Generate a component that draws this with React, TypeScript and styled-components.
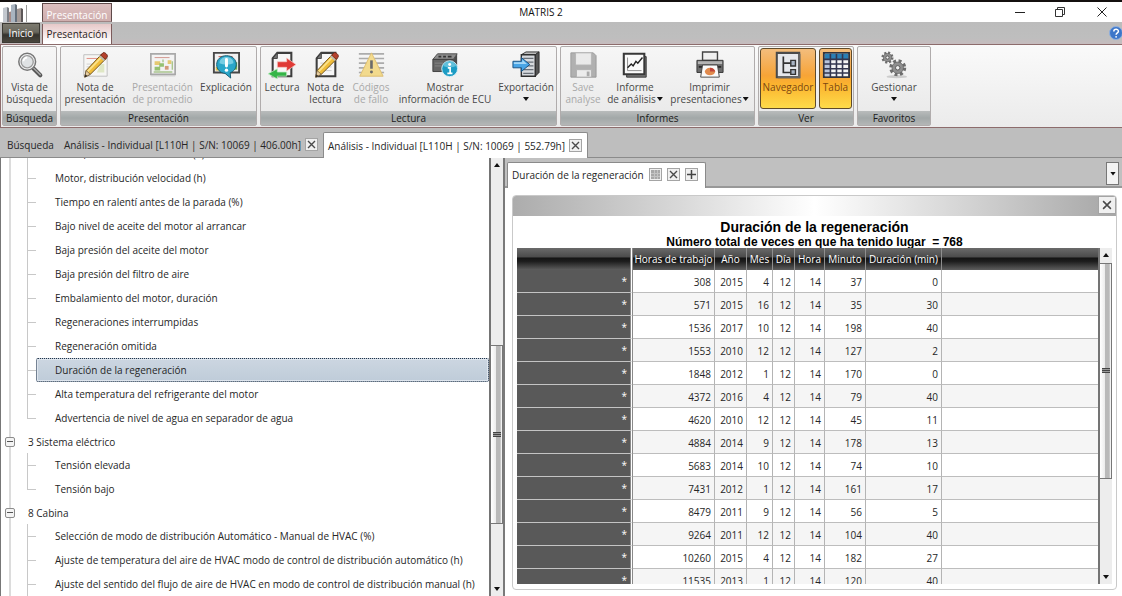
import React from "react";
import styled, { createGlobalStyle, css } from "styled-components";

const Global = createGlobalStyle`
  *, *::before, *::after { box-sizing: border-box; }
  html, body { margin: 0; height: 100%; }
  body { background: #fff; overflow: hidden; }
  #root { height: 100%; }
  body, button, table { font-family: "Open Sans", "Noto Sans", sans-serif; font-size: 10px; color: #262626; }
  button { margin: 0; padding: 0; border: 0; background: none; }
  svg { display: block; }
`;

const Window = styled.div`
  height: 100vh;
  display: flex;
  flex-direction: column;
  border-top: 2px solid #14100f;
`;

/* ---------- Title bar and ribbon tabs ---------- */

const TopArea = styled.header`
  display: grid;
  grid-template-columns: 42px 70px 1fr auto;
  grid-template-rows: 20px 22px;
  background: linear-gradient(#fff 20px, #bcbcbc 20px, #bebebe 36px, #c6bcbe 42px);
`;

const AppIcon = styled.div`
  padding: 2px 0 0 2px;
`;

const ContextHeader = styled.div`
  border: 1px solid #5f4a4a;
  border-bottom-color: #a08484;
  background: linear-gradient(#dcbebe, #cfaeae);
  color: #fff;
  text-align: center;
  line-height: 22px;
  margin-top: 1px;
`;

const Title = styled.h1`
  margin: 0;
  padding-right: 29px;
  font-size: 10px;
  font-weight: 400;
  line-height: 20px;
  color: #111;
  text-align: center;
`;

const WindowButtons = styled.div`
  display: flex;
  align-items: center;
  justify-content: flex-end;
`;

const WindowButton = styled.button`
  width: 41px;
  height: 20px;
  display: flex;
  align-items: center;
  justify-content: center;
`;

const RibbonTabs = styled.nav`
  grid-column: 1 / -1;
  display: flex;
  align-items: stretch;
`;

const StartTab = styled.button`
  width: 38px;
  margin: 1px 2px 1px 2px;
  border: 1px solid #3c3a34;
  color: #fff;
  background: linear-gradient(#7c7a6f, #6a685e 45%, #35332d 60%, #4a473e);
`;

const ActiveRibbonTab = styled.button`
  width: 70px;
  margin-top: 2px;
  border: solid #7c5c5c;
  border-width: 0 1px;
  color: #2a1c1c;
  background: linear-gradient(#e6c8c8, #fff 90%);
`;

const HelpButton = styled.button`
  margin: 4px 0 0 auto;
  width: 13px;
  height: 14px;
  overflow: hidden;
`;

/* ---------- Ribbon ---------- */

const Ribbon = styled.section`
  display: flex;
  gap: 3px;
  padding: 1px;
  border: 1px solid #8d6c6c;
  border-right: 0;
  background: linear-gradient(#fafafa, #ebebeb);
`;

const Group = styled.fieldset`
  min-width: 0;
  margin: 0;
  padding: 0;
  display: flex;
  flex-direction: column;
  border: 1px solid #b0acac;
  border-radius: 2px;
  background: linear-gradient(#f6f6f6, #e8e8e8);
`;

const GroupBody = styled.div<{ $spaced?: boolean }>`
  display: flex;
  gap: ${(p) => (p.$spaced ? 3 : 0)}px;
  height: 64px;
  padding: 1px;
`;

const GroupLabel = styled.div`
  height: 14px;
  line-height: 14px;
  text-align: center;
  color: #1c1c1c;
  background: linear-gradient(#b9bcbc, #a2a8a8 50%, #b4b6b6);
`;

const Tool = styled.button<{ $w: number; $on?: boolean }>`
  width: ${(p) => p.$w}px;
  height: 61px;
  display: flex;
  flex-direction: column;
  align-items: center;
  line-height: 12px;
  color: #484848;
  white-space: nowrap;
  border: 1px solid transparent;
  border-width: 1px 0;
  border-radius: 3px;
  &:disabled { color: #a9a9a9; }
  &:disabled svg { opacity: 0.6; }
  ${(p) =>
    p.$on &&
    css`
      color: #7d4712;
      border-width: 1px;
      border-color: #5f4a2a;
      background: linear-gradient(#f3bd7d, #f7a437 45%, #fbb32e 60%, #fedb4a);
    `}
`;

const IconBox = styled.span`
  height: 32px;
  display: flex;
  align-items: center;
`;

const Caret = styled.span`
  display: inline-block;
  width: 6px;
  height: 4px;
  margin-left: 1px;
  vertical-align: 2px;
  background: #111;
  clip-path: polygon(0 0, 100% 0, 50% 100%);
`;

const CaretBelow = styled(Caret)`
  display: block;
  margin: 4px 0 0;
`;

/* ---------- Document tabs ---------- */

const DocTabs = styled.nav`
  display: flex;
  gap: 5px;
  align-items: stretch;
  height: 30px;
  padding: 4px 0 0 2px;
  background: #bebebe;
  border-bottom: 1px solid #8b8b8b;
`;

const DocTab = styled.div<{ $active?: boolean }>`
  display: flex;
  align-items: center;
  gap: 4px;
  padding: 0 0 0 5px;
  ${(p) =>
    p.$active &&
    css`
      margin-bottom: -1px;
      padding: 0 5px 0 4px;
      border: 1px solid #8b8b8b;
      border-bottom: 0;
      border-radius: 2px 2px 0 0;
      background: #fff;
    `}
`;

const TabText = styled.button`
  white-space: nowrap;
`;

const SquareButton = styled.button<{ $size?: number }>`
  flex: none;
  width: ${(p) => p.$size ?? 13}px;
  height: ${(p) => p.$size ?? 13}px;
  display: flex;
  align-items: center;
  justify-content: center;
  border: 1px solid #a4a4a4;
  background: #f0f0f0;
`;

/* ---------- Tree ---------- */

const Main = styled.main`
  flex: 1;
  min-height: 0;
  display: grid;
  grid-template-columns: minmax(0, 505fr) minmax(0, 617fr);
`;

const Navigator = styled.aside`
  display: flex;
  min-height: 0;
  border-left: 1px solid #777;
  border-right: 2px solid #7a7a7a;
`;

const Tree = styled.ul`
  flex: 1;
  min-width: 0;
  margin: 0;
  padding: 0;
  list-style: none;
  overflow: hidden;
  background: linear-gradient(90deg, transparent 8px, #dcdcdc 8px, #dcdcdc 10px, transparent 10px);
`;

const Leaf = styled.li<{ $last?: boolean; $clipped?: boolean }>`
  display: flex;
  align-items: flex-end;
  height: ${(p) => (p.$clipped ? 8 : 24)}px;
  overflow: hidden;
  padding-left: 26px;
  white-space: nowrap;
  &::before {
    content: "";
    flex: none;
    width: 9px;
    height: 24px;
    background:
      linear-gradient(#c8c8c8, #c8c8c8) 0 0 / 1px ${(p) => (p.$last ? "12px" : "100%")} no-repeat,
      linear-gradient(#c8c8c8, #c8c8c8) 0 12px / 9px 1px no-repeat;
  }
`;

const LeafLabel = styled.button<{ $selected?: boolean }>`
  flex: 1;
  height: 24px;
  padding-left: 18px;
  border: 1px solid transparent;
  text-align: left;
  white-space: nowrap;
  ${(p) =>
    p.$selected &&
    css`
      border: 1px dotted #24354a;
      border-radius: 2px;
      background: linear-gradient(#ccd6e1, #bfccd9);
      box-shadow: inset 0 0 0 1px #dfe6ee;
    `}
`;

const Branch = styled.li`
  display: flex;
  align-items: center;
  gap: 13px;
  height: 23px;
  padding-left: 4px;
`;

const Expander = styled.button`
  width: 10px;
  height: 10px;
  display: flex;
  align-items: center;
  justify-content: center;
  border: 1px solid #8c8c8c;
  border-radius: 2px;
  background: #f4f4f4;
  &::before { content: ""; width: 6px; height: 1px; background: #555; }
`;

/* ---------- Scroll bar ---------- */

const Scroll = styled.div`
  flex: none;
  width: 14px;
  display: flex;
  flex-direction: column;
  border-left: 2px solid #747474;
  background: #ededed;
`;

const ScrollArrow = styled.button<{ $down?: boolean }>`
  height: 14px;
  display: flex;
  align-items: center;
  justify-content: center;
  &::before {
    content: "";
    width: 6px;
    height: 4px;
    background: #111;
    clip-path: ${(p) => (p.$down ? "polygon(0 0, 100% 0, 50% 100%)" : "polygon(50% 0, 100% 100%, 0 100%)")};
  }
`;

const ScrollGap = styled.div<{ $grow: number }>`
  flex: ${(p) => p.$grow} 1 0;
`;

const Thumb = styled.div<{ $grow: number }>`
  flex: ${(p) => p.$grow} 1 0;
  display: flex;
  align-items: center;
  justify-content: center;
  border: 1px solid #777;
  border-width: 1px 1px 1px 0;
  background: linear-gradient(90deg, #fff 0, #ececec 45%, #b9b9b9 50%, #b9b9b9 85%, #f2f2f2 90%);
  &::before {
    content: "";
    width: 8px;
    height: 5px;
    background: repeating-linear-gradient(#444 0, #444 1px, #999 1px, #999 2px);
  }
`;

/* ---------- Presentation pane ---------- */

const Pane = styled.section`
  display: flex;
  flex-direction: column;
  min-height: 0;
  background: #fff;
`;

const PaneTabs = styled.div`
  display: flex;
  height: 30px;
  padding: 4px 3px 0 2px;
  background: #c0c0c0;
  border-bottom: 2px solid #989898;
`;

const PaneTab = styled.div`
  display: flex;
  align-items: center;
  gap: 5px;
  margin-bottom: -2px;
  padding: 0 7px 2px 4px;
  border: 1px solid #8a8a8a;
  border-bottom: 0;
  border-radius: 2px 2px 0 0;
  background: #fff;
`;

const PaneMenu = styled.button`
  width: 13px;
  height: 23px;
  margin-left: auto;
  display: flex;
  align-items: center;
  justify-content: center;
  border: 1px solid #777;
  background: #f3f3f3;
`;

const Card = styled.article`
  flex: 1;
  min-height: 0;
  display: flex;
  flex-direction: column;
  margin: 7px 5px 6px 7px;
  border: 1px solid #c9c9c9;
  border-radius: 4px;
  overflow: hidden;
`;

const CardBar = styled.div`
  display: flex;
  justify-content: flex-end;
  height: 20px;
  background: linear-gradient(90deg, #acacac, #d4d4d4 25%, #fff 50%, #d4d4d4 75%, #a6a6a6);
`;

const CardTitle = styled.h2`
  margin: 0;
  padding-top: 1px;
  font: bold 14px/20px "Liberation Sans", Arial, sans-serif;
  color: #000;
  text-align: center;
`;

const CardSubtitle = styled.p`
  margin: 0;
  height: 11px;
  font: bold 12px/11px "Liberation Sans", Arial, sans-serif;
  color: #000;
  text-align: center;
  white-space: pre;
`;

const TableArea = styled.div`
  flex: 1;
  min-height: 0;
  display: flex;
  margin: 0 4px 5px 4px;
`;

const TableClip = styled.div`
  flex: 1;
  min-width: 0;
  overflow: hidden;
`;

const Column = styled.col<{ $w?: number }>`
  width: ${(p) => (p.$w ? `${p.$w}px` : "auto")};
`;

const DataTable = styled.table`
  width: 100%;
  table-layout: fixed;
  border-collapse: separate;
  border-spacing: 0;
  thead th {
    height: 22px;
    padding: 0;
    font-weight: 400;
    color: #fff;
    text-align: center;
    white-space: nowrap;
    border-right: 1px solid #8e8e8e;
    background: linear-gradient(#6a6a6a, #4c4c4c 40%, #141414 46%, #1c1c1c 60%, #5e5e5e);
  }
  tbody td {
    height: 23px;
    padding: 2px 3px 0 0;
    text-align: right;
    border-right: 1px solid #b4b4b4;
    border-bottom: 1px solid #bdbdbd;
  }
  tbody tr:nth-child(even) td { background: #f5f5f5; }
  tbody th {
    padding: 0 3px 0 0;
    font-weight: 400;
    color: #fff;
    text-align: right;
    border-bottom: 1px solid #c4c4c4;
    background: #595959;
  }
  thead th:first-child, tbody th { border-right: 3px double #8a8a8a; background-clip: padding-box; }
  td:last-child, thead th:last-child { border-right: 0; }
`;

/* ---------- Icons ---------- */

const Icon = ({ children }: { children: React.ReactNode }) => (
  <svg width="28" height="28" viewBox="0 0 30 30" aria-hidden="true">
    {children}
  </svg>
);

const Cross = ({ size = 9 }: { size?: number }) => (
  <svg width={size} height={size} viewBox="0 0 9 9" aria-hidden="true">
    <path d="M1 1l7 7M8 1L1 8" stroke="#4a4a4a" strokeWidth="1.4" />
  </svg>
);

const LogoIcon = () => (
  <svg width="26" height="18" viewBox="0 0 26 18" aria-hidden="true">
    <path d="M1 4l4-1v15H1z" fill="#c2c7ce" />
    <path d="M5 3l2 1v14H5z" fill="#7b7f87" />
    <path d="M7 8l4-1v11H7z" fill="#a58a86" />
    <path d="M9 1l4-1v18H9z" fill="#a9b4c0" />
    <path d="M13 0l2 1v17h-2z" fill="#66707c" />
    <path d="M15 5l4-1v14h-4z" fill="#a59b98" />
    <path d="M19 4l2 1v13h-2z" fill="#5c5758" />
    <path d="M24.500 1v17" stroke="#999" />
  </svg>
);

const SearchIcon = () => (
  <Icon>
    <path d="M19 19l7 7" stroke="#555" strokeWidth="4.500" strokeLinecap="round" />
    <path d="M19 18.500l7 7" stroke="#aaa" strokeWidth="1.600" strokeLinecap="round" />
    <circle cx="12" cy="11.500" r="9" fill="#f2f3f4" stroke="#777" strokeWidth="1.600" />
    <circle cx="12" cy="11.500" r="6.500" fill="#dfe2e4" stroke="#9a9a9a" strokeWidth="1.400" />
    <path d="M8 11a4 4 0 0 1 4-4" fill="none" stroke="#fff" strokeWidth="2" />
  </Icon>
);

const Pencil = () => (
  <g>
    <path d="M4 28l1.500-7L22 3.500l5 4.500L10 25z" fill="#f0bd3a" stroke="#6d4d16" strokeWidth="1" />
    <path d="M7 22L23.500 5" stroke="#fbe28a" strokeWidth="2" />
    <path d="M21 4.500L23.500 2c1.500-1.500 6 2.500 4.500 4.500L26 9z" fill="#b5402c" stroke="#6b2a1c" />
    <path d="M20 5.500l5 4.500" stroke="#b9b9b9" strokeWidth="1.600" />
    <path d="M4 28l1.500-7L10 25z" fill="#e9cfa0" stroke="#5b4a35" strokeWidth=".7" />
    <path d="M4 28l.7-3 2 1.800z" fill="#222" />
  </g>
);

const PresentationNoteIcon = () => (
  <Icon>
    <path d="M3 4h25v23H3z" fill="#f6f6f4" stroke="#bdbdbd" />
    <path d="M6 8h14" stroke="#e08a80" />
    <path d="M17 23h8v-9h-4z" fill="#dfe7c5" />
    <path d="M6 14h6M6 17h5" stroke="#ccc" />
    <Pencil />
  </Icon>
);

const AverageIcon = () => (
  <Icon>
    <path d="M2 3h26v22H2z" fill="#f3f3f3" stroke="#777" strokeWidth="1.800" />
    <path d="M2 26.500h26" stroke="#bbb" strokeWidth="1.500" />
    <path d="M6 7h16" stroke="#c2695d" strokeWidth="1.200" />
    <path d="M6 11h6v4H6zM20 10h4v4h-4z" fill="#dcae1d" />
    <path d="M11 13h5v4h-5zM6 17h6v4H6z" fill="#58a01c" />
    <path d="M17 16h4v4h-4z" fill="#c0602a" />
    <path d="M25 11v9M5 22.500h20M15 9v3" stroke="#7aa84d" strokeWidth="1.500" />
  </Icon>
);

const ExplanationIcon = () => (
  <Icon>
    <path d="M2 2h27v21H2z" fill="#f1f1f1" stroke="#474747" strokeWidth="2" />
    <path d="M7 6h15" stroke="#c75a4c" />
    <path d="M4 17h7v4H4z" fill="#e3c04a" />
    <path d="M23 12h4v8h-4z" fill="#76b04a" />
    <path d="M15.500 5c6.300 0 10.500 4.200 10.500 9.500 0 4.200-3 7.500-6.500 8.800L20 29l-6-5C8.500 23.500 5 19.500 5 14.500 5 9.200 9.200 5 15.500 5z" fill="#2aa6c9" stroke="#12586f" />
    <path d="M8 13c0-4 3.500-6.500 7.500-6.500S23 9 23 13c-4 2-11 2-15 0z" fill="#8ad7ea" opacity=".8" />
    <path d="M15.500 9v7" stroke="#fff" strokeWidth="3.200" strokeLinecap="round" />
    <circle cx="15.500" cy="20.500" r="1.800" fill="#fff" />
  </Icon>
);

const Sheet = () => (
  <g>
    <path d="M10 2h15v25H5V8z" fill="#f7f7f7" stroke="#3e3e3e" strokeWidth="2.200" />
    <path d="M5 8l5-6v6z" fill="#777" stroke="#3e3e3e" />
  </g>
);

const ReadIcon = () => (
  <Icon>
    <Sheet />
    <path d="M10 11.500h10V7.500l10 7-10 7v-4H10z" fill="#e03a36" stroke="#f6c9c4" strokeWidth=".8" />
    <path d="M20 27h-10v3L0 24.500 10 19v3.500h10z" fill="#35b548" stroke="#c5efc9" strokeWidth=".8" />
  </Icon>
);

const ReadNoteIcon = () => (
  <Icon>
    <Sheet />
    <path d="M9 13h12M9 17h12M9 21h12" stroke="#c8c8c8" />
    <Pencil />
  </Icon>
);

const FaultIcon = () => (
  <Icon>
    <path d="M2 3h27M2 8h27M2 13h27M2 18h27M2 23h27" stroke="#7c7c7c" strokeWidth="1.800" />
    <path d="M15.500 2L28 27H3z" fill="#f3cb4b" stroke="#d09a1a" strokeLinejoin="round" />
    <path d="M15.500 10v9" stroke="#111" strokeWidth="2.800" />
    <circle cx="15.500" cy="22.500" r="1.600" fill="#111" />
  </Icon>
);

const EcuIcon = () => (
  <Icon>
    <path d="M2 9l5-6h21l-4 6z" fill="#8d8d8d" stroke="#4a4a4a" />
    <path d="M2 9h22v13H2z" fill="#666" stroke="#3d3d3d" />
    <path d="M24 9l4-6v12l-4 7z" fill="#4b4b4b" />
    <path d="M8 6h3M13 6h3M18 6h4" stroke="#333" strokeWidth="2" />
    <path d="M4 13h9M4 16h7" stroke="#888" />
    <circle cx="20" cy="19" r="8.500" fill="#1c9cc4" stroke="#d9f0f7" />
    <path d="M13 16a7.500 7.500 0 0 1 14 0c-4 2-10 2-14 0z" fill="#7fd0e6" opacity=".7" />
    <circle cx="20" cy="14.500" r="1.600" fill="#fff" />
    <path d="M18 18h2.500v6M17.500 24h5.500" fill="none" stroke="#fff" strokeWidth="1.800" />
  </Icon>
);

const ExportIcon = () => (
  <Icon>
    <path d="M10 4l5-3h14l-4 3z" fill="#bbb" stroke="#333" />
    <path d="M10 4h15v23H10z" fill="#d7dade" stroke="#2e2e2e" strokeWidth="1.500" />
    <path d="M25 4l4-3v22l-4 4z" fill="#555" stroke="#2e2e2e" />
    <path d="M12 8h11M12 12h11M12 16h11M12 20h11M12 24h11" stroke="#6a7078" strokeWidth="1.300" />
    <path d="M1 11h9V7l9 7.500-9 7.500v-4H1z" fill="#49a5e6" stroke="#174f80" />
    <path d="M2 12h9V9.500l5 4.500H2z" fill="#a6d8f7" />
  </Icon>
);

const SaveIcon = () => (
  <Icon>
    <path d="M2 2h24l3 3v23H2z" fill="#858585" stroke="#606060" />
    <path d="M7 2h17v13H7z" fill="#e4e4e4" stroke="#8c8c8c" />
    <path d="M8 20h16v8H8z" fill="#e9e9e9" stroke="#858585" />
    <path d="M19 22h3v5h-3z" fill="#7d7d7d" />
  </Icon>
);

const ReportIcon = () => (
  <Icon>
    <path d="M7 6h20v22H6z" fill="#7b7b7b" stroke="#333" />
    <path d="M3 3h22v22H3z" fill="#fafafa" stroke="#383838" strokeWidth="2.200" />
    <path d="M7 7v14h15" fill="none" stroke="#8a8a8a" />
    <path d="M7 18l4-4 2 2 3-5 2 2 5-6" fill="none" stroke="#222" strokeWidth="1.500" />
  </Icon>
);

const PrintIcon = () => (
  <Icon>
    <path d="M7 1h16v9H7z" fill="#f0f0f0" stroke="#444" strokeWidth="1.500" />
    <path d="M1 10h28v13H1z" fill="#6c6c6c" stroke="#333" />
    <path d="M2 11h26v3H2z" fill="#b4b4b4" />
    <path d="M3 17h24" stroke="#2b2b2b" strokeWidth="2" />
    <path d="M7 15h16l2 13H5z" fill="#fafafa" stroke="#444" />
    <ellipse cx="15" cy="22" rx="5.500" ry="4" fill="#e08a4d" />
    <path d="M15 18a5.500 4 0 0 1 5.500 4H15z" fill="#c0453a" />
  </Icon>
);

const NavigatorIcon = () => (
  <Icon>
    <path d="M3 2h24v26H3z" fill="#e6e8ec" stroke="#4a4a4a" strokeWidth="2.200" />
    <path d="M27 3v25H4" fill="none" stroke="#666" strokeWidth="2.600" />
    <path d="M10 6v17h8M10 13h8" fill="none" stroke="#333" strokeWidth="1.800" />
    <path d="M18 10h5v6h-5zM18 20h5v5h-5z" fill="#a8b4c4" stroke="#333" strokeWidth="1.500" />
  </Icon>
);

const TableIcon = () => (
  <Icon>
    <path d="M2 2h27v26H2z" fill="#f5f5f5" stroke="#33343c" strokeWidth="2" />
    <path d="M3 3h25v6H3z" fill="#2b7fb5" />
    <path d="M3 9h6v18H3z" fill="#b9c4dc" />
    <path d="M2 9h27M2 14h27M2 19h27M2 23.500h27M9 3v25M15.500 3v25M22 3v25" stroke="#33364f" strokeWidth="1.700" />
  </Icon>
);

const Gear = ({ x, y, r }: { x: number; y: number; r: number }) => (
  <g transform={`translate(${x} ${y})`}>
    <circle r={r} fill="none" stroke="#6e6e6e" strokeWidth={r * 0.6} strokeDasharray={`${r * 0.42} ${r * 0.3654}`} />
    <circle r={r * 0.88} fill="#8f8f8f" stroke="#636363" strokeWidth=".8" />
    <circle r={r * 0.34} fill="#efefef" stroke="#555" />
  </g>
);

const GearsIcon = () => (
  <Icon>
    <ellipse cx="18" cy="27.500" rx="11" ry="1.800" fill="#ccc" />
    <Gear x={8} y={7} r={5} />
    <Gear x={19} y={18} r={7} />
  </Icon>
);

const HelpIcon = () => (
  <svg width="14" height="14" viewBox="0 0 14 14" aria-hidden="true">
    <circle cx="7" cy="7" r="6.500" fill="#3d76c9" stroke="#8fb0df" />
    <path d="M4.800 5.500c0-3 4.600-2.800 4.600-.3 0 1.600-2.300 1.700-2.300 3.500" fill="none" stroke="#fff" strokeWidth="1.500" />
    <circle cx="7.100" cy="10.800" r=".9" fill="#fff" />
  </svg>
);

/* ---------- Content ---------- */

type ToolDef = {
  icon: React.ReactNode;
  lines: string[];
  w: number;
  disabled?: boolean;
  on?: boolean;
  caret?: "inline" | "below";
};

const groups: { label: string; spaced?: boolean; tools: ToolDef[] }[] = [
  { label: "Búsqueda", tools: [{ icon: <SearchIcon />, lines: ["Vista de", "búsqueda"], w: 51 }] },
  {
    label: "Presentación",
    tools: [
      { icon: <PresentationNoteIcon />, lines: ["Nota de", "presentación"], w: 66 },
      { icon: <AverageIcon />, lines: ["Presentación", "de promedio"], w: 69, disabled: true },
      { icon: <ExplanationIcon />, lines: ["Explicación"], w: 58 },
    ],
  },
  {
    label: "Lectura",
    tools: [
      { icon: <ReadIcon />, lines: ["Lectura"], w: 40 },
      { icon: <ReadNoteIcon />, lines: ["Nota de", "lectura"], w: 47 },
      { icon: <FaultIcon />, lines: ["Códigos", "de fallo"], w: 44, disabled: true },
      { icon: <EcuIcon />, lines: ["Mostrar", "información de ECU"], w: 104 },
      { icon: <ExportIcon />, lines: ["Exportación"], w: 58, caret: "below" },
    ],
  },
  {
    label: "Informes",
    tools: [
      { icon: <SaveIcon />, lines: ["Save", "analyse"], w: 42, disabled: true },
      { icon: <ReportIcon />, lines: ["Informe", "de análisis"], w: 62, caret: "inline" },
      { icon: <PrintIcon />, lines: ["Imprimir", "presentaciones"], w: 87, caret: "inline" },
    ],
  },
  {
    label: "Ver",
    spaced: true,
    tools: [
      { icon: <NavigatorIcon />, lines: ["Navegador"], w: 56, on: true },
      { icon: <TableIcon />, lines: ["Tabla"], w: 33, on: true },
    ],
  },
  { label: "Favoritos", tools: [{ icon: <GearsIcon />, lines: ["Gestionar"], w: 70, caret: "below" }] },
];

type Node = { text: string; branch?: boolean; last?: boolean; selected?: boolean; clipped?: boolean };

const nodes: Node[] = [
  { text: "Motor, distribución de motor (h)", clipped: true },
  { text: "Motor, distribución velocidad (h)" },
  { text: "Tiempo en ralentí antes de la parada (%)" },
  { text: "Bajo nivel de aceite del motor al arrancar" },
  { text: "Baja presión del aceite del motor" },
  { text: "Baja presión del filtro de aire" },
  { text: "Embalamiento del motor, duración" },
  { text: "Regeneraciones interrumpidas" },
  { text: "Regeneración omitida" },
  { text: "Duración de la regeneración", selected: true },
  { text: "Alta temperatura del refrigerante del motor" },
  { text: "Advertencia de nivel de agua en separador de agua", last: true },
  { text: "3 Sistema eléctrico", branch: true },
  { text: "Tensión elevada" },
  { text: "Tensión bajo", last: true },
  { text: "8 Cabina", branch: true },
  { text: "Selección de modo de distribución Automático - Manual de HVAC (%)" },
  { text: "Ajuste de temperatura del aire de HVAC modo de control de distribución automático (h)" },
  { text: "Ajuste del sentido del flujo de aire de HVAC en modo de control de distribución manual (h)" },
];

const columns = [
  { label: "Horas de trabajo", w: 82 },
  { label: "Año", w: 32 },
  { label: "Mes", w: 26 },
  { label: "Día", w: 22 },
  { label: "Hora", w: 30 },
  { label: "Minuto", w: 41 },
  { label: "Duración (min)", w: 76 },
];

const rows = [
  [308, 2015, 4, 12, 14, 37, 0],
  [571, 2015, 16, 12, 14, 35, 30],
  [1536, 2017, 10, 12, 14, 198, 40],
  [1553, 2010, 12, 12, 14, 127, 2],
  [1848, 2012, 1, 12, 14, 170, 0],
  [4372, 2016, 4, 12, 14, 79, 40],
  [4620, 2010, 12, 12, 14, 45, 11],
  [4884, 2014, 9, 12, 14, 178, 13],
  [5683, 2014, 10, 12, 14, 74, 10],
  [7431, 2012, 1, 12, 14, 161, 17],
  [8479, 2011, 9, 12, 14, 56, 5],
  [9264, 2011, 12, 12, 14, 104, 40],
  [10260, 2015, 4, 12, 14, 182, 27],
  [11535, 2013, 1, 12, 14, 120, 40],
];

function RibbonTool({ tool }: { tool: ToolDef }) {
  return (
    <Tool $w={tool.w} $on={tool.on} disabled={tool.disabled} aria-pressed={tool.on}>
      <IconBox>{tool.icon}</IconBox>
      {tool.lines.map((line, i) => (
        <span key={line}>
          {line}
          {tool.caret === "inline" && i === tool.lines.length - 1 && <Caret />}
        </span>
      ))}
      {tool.caret === "below" && <CaretBelow />}
    </Tool>
  );
}

function ScrollBar({ before, thumb, after }: { before: number; thumb: number; after: number }) {
  return (
    <Scroll>
      <ScrollArrow aria-label="Subir" />
      <ScrollGap $grow={before} />
      <Thumb $grow={thumb} />
      <ScrollGap $grow={after} />
      <ScrollArrow $down aria-label="Bajar" />
    </Scroll>
  );
}

export default function App() {
  return (
    <>
      <Global />
      <Window>
        <TopArea>
          <AppIcon>
            <LogoIcon />
          </AppIcon>
          <ContextHeader>Presentación</ContextHeader>
          <Title>MATRIS 2</Title>
          <WindowButtons>
            <WindowButton aria-label="Minimizar">
              <svg width="10" height="10">
                <path d="M0 5.500h10" stroke="#222" />
              </svg>
            </WindowButton>
            <WindowButton aria-label="Restaurar">
              <svg width="11" height="10" fill="none" stroke="#333">
                <path d="M.5 2.500h7v7h-7zM2.500 2.500v-2h7v7h-2" />
              </svg>
            </WindowButton>
            <WindowButton aria-label="Cerrar">
              <svg width="10" height="10">
                <path d="M.5.5l9 9M9.500.5l-9 9" stroke="#222" />
              </svg>
            </WindowButton>
          </WindowButtons>
          <RibbonTabs>
            <StartTab>Inicio</StartTab>
            <ActiveRibbonTab>Presentación</ActiveRibbonTab>
            <HelpButton aria-label="Ayuda">
              <HelpIcon />
            </HelpButton>
          </RibbonTabs>
        </TopArea>

        <Ribbon>
          {groups.map((group) => (
            <Group key={group.label} aria-label={group.label}>
              <GroupBody $spaced={group.spaced}>
                {group.tools.map((tool) => (
                  <RibbonTool key={tool.lines.join(" ")} tool={tool} />
                ))}
              </GroupBody>
              <GroupLabel>{group.label}</GroupLabel>
            </Group>
          ))}
        </Ribbon>

        <DocTabs>
          <DocTab>
            <TabText>Búsqueda</TabText>
          </DocTab>
          <DocTab>
            <TabText>Análisis - Individual [L110H | S/N: 10069 | 406.00h]</TabText>
            <SquareButton aria-label="Cerrar pestaña">
              <Cross />
            </SquareButton>
          </DocTab>
          <DocTab $active>
            <TabText>Análisis - Individual [L110H | S/N: 10069 | 552.79h]</TabText>
            <SquareButton aria-label="Cerrar pestaña">
              <Cross />
            </SquareButton>
          </DocTab>
        </DocTabs>

        <Main>
          <Navigator>
            <Tree>
              {nodes.map((node) =>
                node.branch ? (
                  <Branch key={node.text}>
                    <Expander aria-label={`Contraer ${node.text}`} />
                    {node.text}
                  </Branch>
                ) : (
                  <Leaf key={node.text} $last={node.last} $clipped={node.clipped}>
                    <LeafLabel $selected={node.selected}>{node.text}</LeafLabel>
                  </Leaf>
                ),
              )}
            </Tree>
            <ScrollBar before={174} thumb={178} after={58} />
          </Navigator>

          <Pane>
            <PaneTabs>
              <PaneTab>
                <TabText>Duración de la regeneración</TabText>
                <SquareButton aria-label="Ver tabla">
                  <svg width="9" height="9">
                    <path d="M0 0h9v9H0z" fill="#a8a8a8" />
                    <path d="M0 3.500h9M0 6.500h9M3.500 0v9M6.500 0v9" stroke="#c4c4c4" />
                  </svg>
                </SquareButton>
                <SquareButton aria-label="Cerrar">
                  <Cross />
                </SquareButton>
                <SquareButton aria-label="Añadir">
                  <svg width="9" height="9">
                    <path d="M4.500 0v9M0 4.500h9" stroke="#444" strokeWidth="1.500" />
                  </svg>
                </SquareButton>
              </PaneTab>
              <PaneMenu aria-label="Lista de pestañas">
                <Caret />
              </PaneMenu>
            </PaneTabs>

            <Card>
              <CardBar>
                <SquareButton $size={18} aria-label="Cerrar presentación">
                  <Cross size={10} />
                </SquareButton>
              </CardBar>
              <CardTitle>Duración de la regeneración</CardTitle>
              <CardSubtitle>{"Número total de veces en que ha tenido lugar  = 768"}</CardSubtitle>
              <TableArea>
                <TableClip>
                  <DataTable>
                    <colgroup>
                      <Column $w={116} />
                      {columns.map((c) => (
                        <Column key={c.label} $w={c.w} />
                      ))}
                      <Column />
                    </colgroup>
                    <thead>
                      <tr>
                        <th />
                        {columns.map((c) => (
                          <th key={c.label} scope="col">
                            {c.label}
                          </th>
                        ))}
                        <th />
                      </tr>
                    </thead>
                    <tbody>
                      {rows.map((row) => (
                        <tr key={row[0]}>
                          <th scope="row">*</th>
                          {row.map((value, i) => (
                            <td key={i}>{value}</td>
                          ))}
                          <td />
                        </tr>
                      ))}
                    </tbody>
                  </DataTable>
                </TableClip>
                <ScrollBar before={1} thumb={215} after={92} />
              </TableArea>
            </Card>
          </Pane>
        </Main>
      </Window>
    </>
  );
}
